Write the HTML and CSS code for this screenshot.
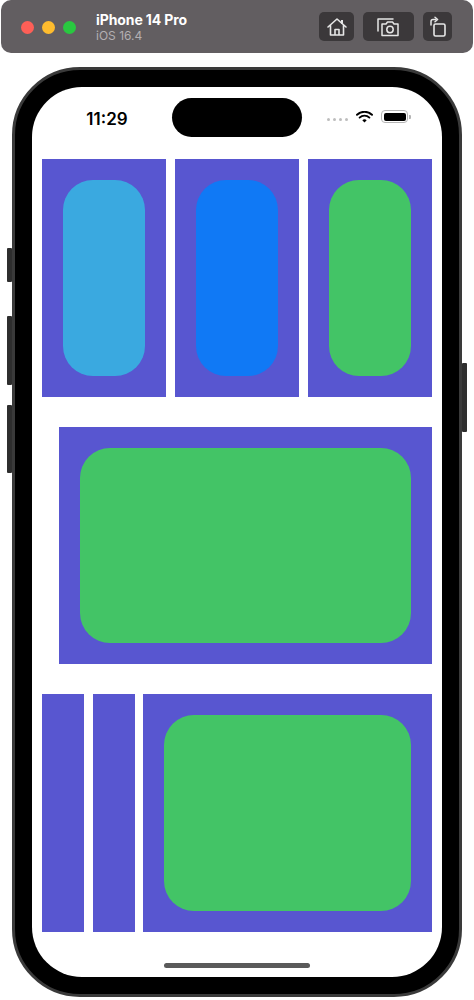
FILE: index.html
```html
<!DOCTYPE html>
<html>
<head>
<meta charset="utf-8">
<link rel="stylesheet" href="styles.css">
</head>
<body>
<div class="titlebar">
  <div class="lights">
    <span class="light red"></span>
    <span class="light yellow"></span>
    <span class="light green"></span>
  </div>
  <div class="title">
    <div class="name">iPhone 14 Pro</div>
    <div class="os">iOS 16.4</div>
  </div>
  <div class="tools">
    <div class="tool home">
      <svg width="22" height="20" viewBox="0 0 22 20"><path d="M2 10 L11 2 L20 10 M4.5 8 V18 H17.5 V8 M9 18 V12.5 H13 V18" fill="none" stroke="#e6e6e6" stroke-width="1.6" stroke-linejoin="round" stroke-linecap="round"/><rect x="15" y="3" width="2" height="4" fill="#e6e6e6"/></svg>
    </div>
    <div class="tool cam">
      <svg width="26" height="22" viewBox="0 0 26 22"><path d="M2 15 V3 H17" fill="none" stroke="#e6e6e6" stroke-width="1.5" stroke-linecap="round" stroke-linejoin="round"/><path d="M6 8 H10 L11.5 6 H16.5 L18 8 H22 V19.5 H6 Z" fill="none" stroke="#e6e6e6" stroke-width="1.5" stroke-linejoin="round"/><circle cx="14" cy="13.5" r="3.2" fill="none" stroke="#e6e6e6" stroke-width="1.5"/></svg>
    </div>
    <div class="tool rot">
      <svg width="20" height="22" viewBox="0 0 20 22"><rect x="6" y="8" width="11" height="12" rx="1.5" fill="none" stroke="#e6e6e6" stroke-width="1.6"/><path d="M3 9 V5.5 Q3 3.5 5 3.5 H8" fill="none" stroke="#e6e6e6" stroke-width="1.5" stroke-linecap="round"/><path d="M7 1.2 L9.6 3.5 L7 5.8" fill="none" stroke="#e6e6e6" stroke-width="1.5" stroke-linecap="round" stroke-linejoin="round"/></svg>
    </div>
  </div>
</div>

<div class="device">
  <span class="btn btn-action"></span>
  <span class="btn btn-volup"></span>
  <span class="btn btn-voldown"></span>
  <span class="btn btn-power"></span>
  <div class="screen">
    <div class="status">
      <div class="time">11:29</div>
      <div class="island"></div>
      <div class="icons">
        <span class="dots"><i></i><i></i><i></i><i></i></span>
        <svg class="wifi" width="17" height="12" viewBox="0 0 17 12"><path d="M8.5 11.5 L6.3 9.2 A3.2 3.2 0 0 1 10.7 9.2 Z" fill="#000"/><path d="M3.6 6.6 A7 7 0 0 1 13.4 6.6" fill="none" stroke="#000" stroke-width="1.9" stroke-linecap="round"/><path d="M1 3.8 A10.8 10.8 0 0 1 16 3.8" fill="none" stroke="#000" stroke-width="1.9" stroke-linecap="round"/></svg>
        <span class="battery"><span class="level"></span></span>
        <span class="nub"></span>
      </div>
    </div>
    <div class="content">
      <div class="row row1">
        <div class="box"><div class="pill cyan"></div></div>
        <div class="box"><div class="pill blue"></div></div>
        <div class="box"><div class="pill green"></div></div>
      </div>
      <div class="row row2">
        <div class="box"><div class="pill green"></div></div>
      </div>
      <div class="row row3">
        <div class="box"></div>
        <div class="box"></div>
        <div class="box"><div class="pill green"></div></div>
      </div>
    </div>
    <div class="homebar"></div>
  </div>
</div>
</body>
</html>
```

FILE: styles.css
```css
* { box-sizing: border-box; }
html, body { margin: 0; padding: 0; }
body {
  width: 474px;
  height: 1000px;
  background: #ffffff;
  overflow: hidden;
  font-family: Inter, "Liberation Sans", sans-serif;
}

.titlebar {
  height: 53px;
  margin: 0 1px;
  background: #625e61;
  border-radius: 10px;
  display: flex;
  align-items: center;
  padding: 0 21px 0 20px;
}
.lights { display: flex; gap: 8px; margin-top: 1px; }
.light { width: 13px; height: 13px; border-radius: 50%; display: block; }
.light.red { background: #fd5f57; }
.light.yellow { background: #febc2e; }
.light.green { background: #29c840; }
.title { margin-left: 20px; margin-top: 1px; }
.name { color: #ffffff; font-size: 14px; font-weight: 700; line-height: 16px; letter-spacing: -0.1px; }
.os { color: #b3afb2; font-size: 12px; line-height: 14px; margin-top: 1px; }
.tools { margin-left: auto; display: flex; gap: 9px; }
.tool {
  height: 29px;
  background: #3b383a;
  border-radius: 5px;
  display: flex;
  align-items: center;
  justify-content: center;
}
.tool.home { width: 35px; }
.tool.cam { width: 51px; }
.tool.rot { width: 29px; }

.device {
  position: relative;
  margin: 14px 0 0 12px;
  width: 450px;
  height: 930px;
  border-radius: 68px;
  background: #000;
  border: 3px solid #3a3a3a;
  padding: 17px;
}
.btn {
  position: absolute;
  width: 5px;
  background: #2e2e2e;
  border-radius: 1px;
}
.btn-action { left: -8px; top: 178px; height: 34px; }
.btn-volup { left: -8px; top: 246px; height: 69px; }
.btn-voldown { left: -8px; top: 335px; height: 68px; }
.btn-power { right: -8px; top: 293px; height: 69px; }

.screen {
  position: relative;
  width: 410px;
  height: 890px;
  background: #ffffff;
  border-radius: 50px;
  padding: 11px 10px 0 10px;
}

.status {
  display: grid;
  grid-template-columns: 1fr 130px 1fr;
  height: 39px;
  align-items: center;
}
.time {
  font-size: 17px;
  font-weight: 600;
  color: #000;
  text-align: center;
  padding-left: 0;
  margin-top: 2px;
}
.island {
  height: 39px;
  background: #000;
  border-radius: 20px;
}
.icons {
  display: flex;
  align-items: center;
  justify-content: center;
  padding-left: 4px;
  margin-top: -2px;
}
.dots { display: flex; gap: 3px; margin-right: 8px; margin-top: 5px; }
.dots i { width: 3px; height: 3px; border-radius: 50%; background: #bdbdbd; display: block; }
.wifi { margin-right: 8px; }
.battery {
  width: 27px;
  height: 13px;
  border: 1.5px solid #b5b5b5;
  border-radius: 4px;
  padding: 1.5px;
  display: block;
}
.level { display: block; width: 100%; height: 100%; background: #000; border-radius: 2px; }
.nub { width: 2px; height: 4px; background: #b5b5b5; border-radius: 0 1px 1px 0; margin-left: 1px; display: block; }

.content {
  margin-top: 22px;
  display: flex;
  flex-direction: column;
  gap: 30px;
}
.row { display: grid; }
.row1 { grid-template-columns: 1fr 1fr 1fr; column-gap: 8.5px; height: 238px; }
.row2 { padding-left: 17px; height: 237px; grid-template-columns: 1fr; }
.row3 { grid-template-columns: 41px 41px 1fr; column-gap: 9.5px; height: 238px; }
.box {
  background: #5856d0;
  padding: 21px;
  display: flex;
}
.pill { flex: 1; border-radius: 30px; }
.cyan { background: #3aa9e0; }
.blue { background: #1079f5; }
.green { background: #43c466; }

.homebar {
  position: absolute;
  left: 132px;
  bottom: 9px;
  width: 146px;
  height: 5px;
  border-radius: 3px;
  background: #5a5a5a;
}
```
